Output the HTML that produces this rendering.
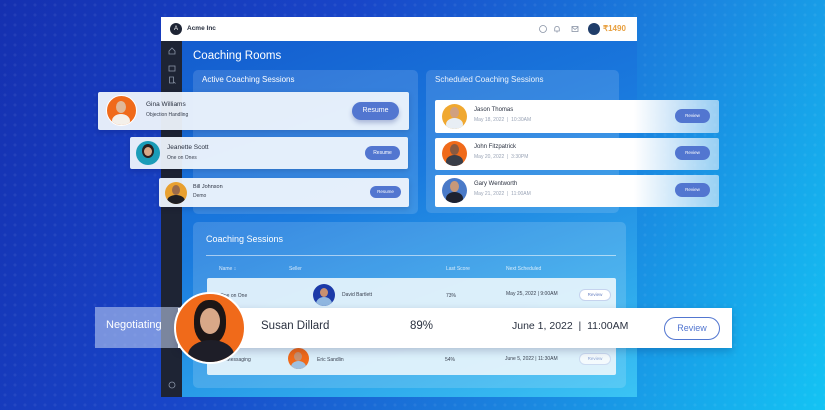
<!DOCTYPE html>
<html><head><style>
*{margin:0;padding:0;box-sizing:border-box}
body{width:825px;height:410px;overflow:hidden;position:relative;font-family:"Liberation Sans",sans-serif;
background:linear-gradient(115deg,#1530b0 0%,#1845c8 35%,#1a86e0 70%,#14c4f4 100%)}
.dots{position:absolute;inset:0;background-image:radial-gradient(circle,rgba(255,255,255,.06) 1.3px,transparent 1.8px);background-size:10px 10px}
.a{position:absolute}
.win{left:161px;top:17px;width:476px;height:380px;background:linear-gradient(160deg,#1358cc 0%,#1a7ade 45%,#3ac4f4 100%)}
.hdr{left:161px;top:17px;width:476px;height:24px;background:#fff}
.side{left:161px;top:41px;width:21px;height:356px;background:#1e2434}
.panel{background:rgba(255,255,255,.13);border-radius:5px}
.card{background:rgba(238,244,252,.95);border-radius:2px;box-shadow:0 2px 6px rgba(0,0,40,.15)}
.wcard{background:linear-gradient(90deg,#fff 0%,#fff 70%,rgba(255,255,255,.55) 100%);border-radius:2px}
.btn{background:#5276d0;color:#fff;border-radius:12px;text-align:center;font-size:6px}
.rv{background:#fff;border:1px solid #c6d3ee;color:#6c84c4;border-radius:8px;text-align:center;font-size:4.5px}
.t{color:#fff}
.av{position:absolute;border-radius:50%;overflow:hidden}
.nm{font-size:6.5px;color:#2a3140}
.sb{font-size:5px;color:#3a4150}
.dt{font-size:5px;color:#9aa4b6}
.th{font-size:5px;color:rgba(255,255,255,.8)}
.td{font-size:5px;color:#3a4150}
</style></head><body>
<div class="dots"></div>
<div class="a win"></div>
<div class="a hdr"></div>
<div class="a side"></div>
<div class="a" style="left:170px;top:23px;width:12px;height:12px;border-radius:50%;background:#1e2434;color:#fff;font-size:6px;text-align:center;line-height:12px">A</div>
<div class="a" style="left:187px;top:25px;font-size:6.5px;color:#2a3140;font-weight:bold">Acme Inc</div>
<svg class="a" style="left:538px;top:24px" width="46" height="10" viewBox="0 0 46 10" fill="none" stroke="#8a94a6" stroke-width=".8"><circle cx="5" cy="5" r="3.5"/><path d="M19 2.5c-1.5 0-2.3 1-2.3 2.5v2h4.6V5c0-1.5-.8-2.5-2.3-2.5zM18.3 8h1.4"/><rect x="34" y="2.5" width="6" height="5"/><path d="M34 3l3 2.5L40 3"/></svg>
<div class="av" style="left:588px;top:23px;width:12px;height:12px;background:#1f3d6a"></div>
<div class="a" style="left:603px;top:24px;font-size:8px;color:#e8a040;font-weight:bold">₹1490</div>
<svg class="a" style="left:167px;top:45px" width="10" height="45" fill="none" stroke="#8a94a6" stroke-width=".8"><path d="M2 6l3-3 3 3v3H2z"/><rect x="2" y="21" width="6" height="5"/><path d="M2.5 38v-6h4v6zM7 37l1.5 1.5"/></svg>
<svg class="a" style="left:167px;top:380px" width="10" height="10" fill="none" stroke="#8a94a6" stroke-width=".8"><circle cx="5" cy="5" r="3"/></svg>
<div class="a t" style="left:193px;top:50px;font-size:11.5px">Coaching Rooms</div>
<div class="a panel" style="left:193px;top:70px;width:225px;height:144px"></div>
<div class="a t" style="left:202px;top:75px;font-size:8px">Active Coaching Sessions</div>
<div class="a panel" style="left:426px;top:70px;width:193px;height:143px"></div>
<div class="a t" style="left:435px;top:75px;font-size:8px;opacity:.9">Scheduled Coaching Sessions</div>
<div class="a panel" style="left:193px;top:222px;width:433px;height:166px;background:rgba(255,255,255,.15)"></div>
<div class="a t" style="left:206px;top:234px;font-size:9px">Coaching Sessions</div>
<div class="a" style="left:206px;top:255px;width:410px;height:1px;background:rgba(255,255,255,.55)"></div>
<div class="a th" style="left:219px;top:266px">Name ↕</div>
<div class="a th" style="left:289px;top:266px">Seller</div>
<div class="a th" style="left:446px;top:266px">Last Score</div>
<div class="a th" style="left:506px;top:266px">Next Scheduled</div>
<div class="a" style="left:207px;top:278px;width:409px;height:97px;background:rgba(235,246,252,.9);border-radius:2px"></div>
<div class="a td" style="left:220px;top:293px">One on One</div>
<div class="av" style="left:313px;top:284px;width:22px;height:22px;background:#1c3aa8"><div class="av" style="left:7px;top:4px;width:8px;height:9px;background:#c89070"></div><div class="av" style="left:3px;top:13px;width:16px;height:14px;background:#8fb6e0"></div></div>
<div class="a td" style="left:342px;top:292px">David Bartlett</div>
<div class="a td" style="left:446px;top:293px">73%</div>
<div class="a td" style="left:506px;top:291px">May 25, 2022 | 9:00AM</div>
<div class="a rv" style="left:579px;top:289px;width:32px;height:12px;line-height:10px">Review</div>
<div class="a td" style="left:216px;top:357px">Live Messaging</div>
<div class="av" style="left:288px;top:348px;width:21px;height:21px;background:#f06a1a"><div class="av" style="left:6px;top:4px;width:8px;height:9px;background:#c89070"></div><div class="av" style="left:3px;top:13px;width:15px;height:12px;background:#9fc0e0"></div></div>
<div class="a td" style="left:317px;top:357px">Eric Sandlin</div>
<div class="a td" style="left:445px;top:357px">54%</div>
<div class="a td" style="left:505px;top:356px">June 5, 2022 | 11:30AM</div>
<div class="a rv" style="left:579px;top:353px;width:32px;height:12px;line-height:10px;opacity:.7">Review</div>
<div class="a card" style="left:98px;top:92px;width:311px;height:38px"></div>
<div class="av" style="left:106px;top:95px;width:31px;height:31px;background:#f06a1a;border:1.5px solid #fff"><div class="av" style="left:9px;top:5px;width:10px;height:12px;background:#e0b898"></div><div class="av" style="left:5px;top:18px;width:18px;height:14px;background:#f4f0ea"></div></div>
<div class="a nm" style="left:146px;top:101px">Gina Williams</div>
<div class="a sb" style="left:146px;top:112px">Objection Handling</div>
<div class="a btn" style="left:352px;top:102px;width:47px;height:18px;line-height:18px;font-size:7px;box-shadow:0 3px 5px rgba(40,60,140,.3)">Resume</div>
<div class="a card" style="left:130px;top:137px;width:278px;height:32px"></div>
<div class="av" style="left:136px;top:141px;width:24px;height:24px;background:#1a9cb8"><div class="av" style="left:6px;top:3px;width:12px;height:14px;background:#2a2020"></div><div class="av" style="left:8px;top:6px;width:8px;height:9px;background:#d8a888"></div></div>
<div class="a nm" style="left:167px;top:144px">Jeanette Scott</div>
<div class="a sb" style="left:167px;top:155px">One on Ones</div>
<div class="a btn" style="left:365px;top:146px;width:35px;height:14px;line-height:14px;font-size:5px">Resume</div>
<div class="a card" style="left:159px;top:178px;width:250px;height:29px"></div>
<div class="av" style="left:165px;top:182px;width:22px;height:22px;background:#e8a030"><div class="av" style="left:7px;top:3px;width:8px;height:10px;background:#9a6a4a"></div><div class="av" style="left:2px;top:13px;width:18px;height:12px;background:#1e1e24"></div></div>
<div class="a nm" style="left:193px;top:184px;font-size:5.5px">Bill Johnson</div>
<div class="a sb" style="left:193px;top:193px">Demo</div>
<div class="a btn" style="left:370px;top:186px;width:31px;height:12px;line-height:12px;font-size:4.5px">Resume</div>
<div class="a wcard" style="left:435px;top:100px;width:284px;height:33px"></div>
<div class="a wcard" style="left:435px;top:138px;width:284px;height:32px"></div>
<div class="a wcard" style="left:435px;top:175px;width:284px;height:32px"></div>
<div class="av" style="left:442px;top:104px;width:25px;height:25px;background:#f0a830"><div class="av" style="left:8px;top:3px;width:9px;height:11px;background:#d0a080"></div><div class="av" style="left:4px;top:14px;width:17px;height:13px;background:#e8eef4"></div></div>
<div class="av" style="left:442px;top:141px;width:25px;height:25px;background:#f06a1a"><div class="av" style="left:8px;top:3px;width:9px;height:11px;background:#8a5a40"></div><div class="av" style="left:4px;top:14px;width:17px;height:13px;background:#3a3e48"></div></div>
<div class="av" style="left:442px;top:178px;width:25px;height:25px;background:#4a7ac8"><div class="av" style="left:8px;top:3px;width:9px;height:11px;background:#c89878"></div><div class="av" style="left:4px;top:14px;width:17px;height:13px;background:#1e2230"></div></div>
<div class="a nm" style="left:474px;top:107px;font-size:6px">Jason Thomas</div>
<div class="a dt" style="left:474px;top:117px">May 18, 2022 &nbsp;| &nbsp;10:30AM</div>
<div class="a nm" style="left:474px;top:144px;font-size:6px">John Fitzpatrick</div>
<div class="a dt" style="left:474px;top:154px">May 20, 2022 &nbsp;| &nbsp;3:30PM</div>
<div class="a nm" style="left:474px;top:181px;font-size:6px">Gary Wentworth</div>
<div class="a dt" style="left:474px;top:191px">May 21, 2022 &nbsp;| &nbsp;11:00AM</div>
<div class="a btn" style="left:675px;top:109px;width:35px;height:14px;line-height:14px;font-size:4.5px">Review</div>
<div class="a btn" style="left:675px;top:146px;width:35px;height:14px;line-height:14px;font-size:4.5px">Review</div>
<div class="a btn" style="left:675px;top:183px;width:35px;height:14px;line-height:14px;font-size:4.5px">Review</div>
<div class="a" style="left:95px;top:307px;width:90px;height:41px;background:rgba(200,215,245,.55)"></div>
<div class="a t" style="left:106px;top:319px;font-size:11px">Negotiating</div>
<div class="a" style="left:178px;top:308px;width:554px;height:40px;background:#fff;box-shadow:0 3px 8px rgba(0,0,60,.2)"></div>
<div class="av" style="left:174px;top:292px;width:72px;height:72px;background:#f06a1a;border:2px solid #fff"><div class="av" style="left:18px;top:6px;width:32px;height:44px;background:#1c1616;border-radius:45%"></div><div class="av" style="left:24px;top:14px;width:20px;height:26px;background:#d8a888"></div><div class="av" style="left:12px;top:46px;width:46px;height:30px;background:#1e1e28"></div></div>
<div class="a" style="left:261px;top:320px;font-size:11.5px;color:#2a3140">Susan Dillard</div>
<div class="a" style="left:410px;top:320px;font-size:11.5px;color:#2a3140">89%</div>
<div class="a" style="left:512px;top:320px;font-size:10.5px;color:#2a3140">June 1, 2022 &nbsp;| &nbsp;11:00AM</div>
<div class="a" style="left:664px;top:317px;width:56px;height:23px;border:1.5px solid #5276d0;border-radius:12px;color:#5276d0;font-size:9px;text-align:center;line-height:20px">Review</div>
</body></html>
